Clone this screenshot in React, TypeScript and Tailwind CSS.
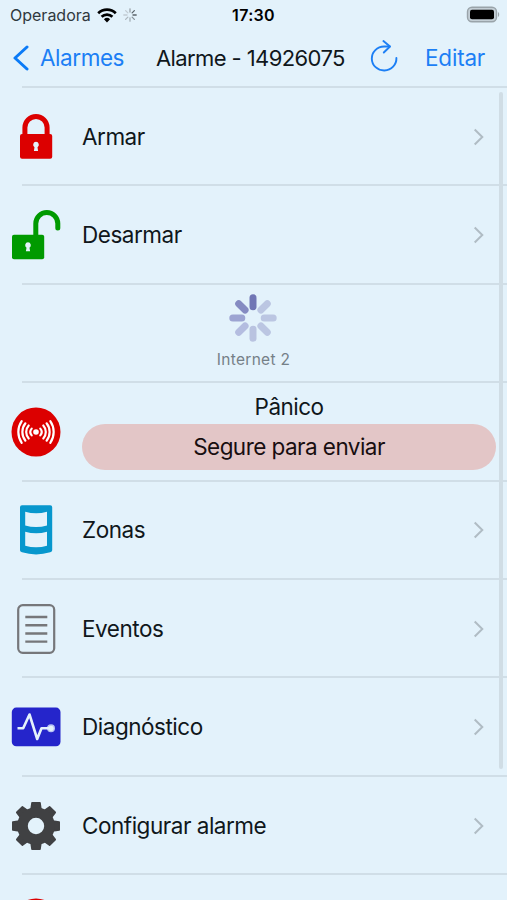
import type { ReactNode } from "react";

function WifiIcon() {
  return (
    <svg width="20" height="15" viewBox="0 0 20 15" className="shrink-0">
      <g fill="none" stroke="#000" strokeWidth="2.7">
        <path d="M1.2 5.2a12.6 12.6 0 0 1 17.6 0" />
        <path d="M4.6 8.8a7.7 7.7 0 0 1 10.8 0" />
      </g>
      <path d="M6.9 11.2a4.5 4.5 0 0 1 6.2 0L10 14.4z" fill="#000" />
    </svg>
  );
}

function StatusSpinner() {
  const shades = ["#9aa2a8", "#59636a", "#59636a", "#87929a", "#a5afb6", "#adb7be", "#c2ccd3", "#c2ccd3"];
  return (
    <svg width="14" height="14" viewBox="0 0 14 14" className="shrink-0">
      {shades.map((c, i) => (
        <path key={i} d="M7 .8V4" stroke={c} strokeWidth="1.3" strokeLinecap="round" transform={`rotate(${i * 45} 7 7)`} />
      ))}
    </svg>
  );
}

function BatteryIcon() {
  return (
    <svg width="34" height="18" viewBox="0 0 34 18">
      <rect x="1.5" y="1.2" width="29" height="14.6" rx="4.5" fill="#c3ced5" stroke="#9aa4aa" strokeWidth="1.4" />
      <rect x="4" y="3.7" width="24" height="9.6" rx="2" fill="#000" />
      <path d="M32 6v5c1.6-.7 1.6-4.3 0-5z" fill="#9aa4aa" />
    </svg>
  );
}

function RefreshIcon() {
  return (
    <svg width="30" height="34" viewBox="0 0 30 34" fill="none" stroke="#1c7ff5" strokeWidth="1.9" strokeLinecap="round" strokeLinejoin="round">
      <path d="M27.4 19A12.3 12 0 1 1 15.1 7.5h5.6" />
      <path d="M14.4 2l6.6 5.5-6.2 6" />
    </svg>
  );
}

function LockIcon() {
  return (
    <svg width="50" height="50" viewBox="0 0 50 50">
      <path d="M11.4 24V15.5a13.6 13.6 0 0 1 27.2 0V24h-5v-8.5a8.6 8.6 0 0 0-17.2 0V24z" fill="#dc0000" />
      <rect x="9" y="22" width="32.2" height="24.8" rx="2" fill="#dc0000" />
      <path d="M25 29.8a3 3 0 0 1 1.5 5.5l.6 3.6h-4.2l.6-3.6a3 3 0 0 1 1.5-5.5z" fill="#e4f2fb" />
    </svg>
  );
}

function UnlockIcon() {
  return (
    <svg width="50" height="50" viewBox="0 0 50 50">
      <path d="M24.8 27V13.5a11 11 0 0 1 22 0V18" fill="none" stroke="#009a00" strokeWidth="5" strokeLinecap="round" />
      <rect x="1" y="24.7" width="32.2" height="24.6" rx="2" fill="#009a00" />
      <path d="M17 32.2a3 3 0 0 1 1.5 5.5l.6 3.6h-4.2l.6-3.6a3 3 0 0 1 1.5-5.5z" fill="#e4f2fb" />
    </svg>
  );
}

function Spinner() {
  const shades = ["#7076b5", "#bbc6e2", "#bbc6e2", "#bbc6e2", "#b9c3e0", "#b4bde0", "#9ca4d2", "#858bc2"];
  return (
    <svg width="50" height="50" viewBox="0 0 50 50" className="mr-[2px]">
      {shades.map((c, i) => (
        <path key={i} d="M25 4.8v9" stroke={c} strokeWidth="7" strokeLinecap="round" transform={`rotate(${i * 45} 25 25)`} />
      ))}
    </svg>
  );
}

function PanicIcon() {
  const side = (
    <>
      <path d="M29.3 21.6a5.2 5.2 0 0 1 0 6.8" />
      <path d="M32.3 18.5a9.7 9.7 0 0 1 0 13" />
      <path d="M35.6 16.3a14 14 0 0 1 0 17.4" />
      <path d="M39.3 14.2a19 19 0 0 1 0 21.6" />
    </>
  );
  return (
    <svg width="50" height="50" viewBox="0 0 50 50">
      <circle cx="25" cy="25" r="24.5" fill="#dc0000" />
      <circle cx="25" cy="25" r="2.8" fill="#fff" />
      <g fill="none" stroke="#fff" strokeWidth="2.2" strokeLinecap="round">
        <g>{side}</g>
        <g transform="matrix(-1 0 0 1 50 0)">{side}</g>
      </g>
    </svg>
  );
}

function ZonesIcon() {
  return (
    <svg width="50" height="50" viewBox="0 0 50 50">
      <path d="M11 .3h28.200q2 0 2 2v43q0 1.500-2 2-14.100 4.200-28.200 0-2-.5-2-2v-43q0-2 2-2z" fill="#0797cd" />
      <path d="M14.200 6.700q10.900 3.200 21.800 0v13.800q-10.900 3.200-21.800 0z" fill="#e4f2fb" />
      <path d="M14.200 26.700q10.900 3.200 21.800 0v14q-10.900 3.200-21.800 0z" fill="#e4f2fb" />
    </svg>
  );
}

function EventsIcon() {
  return (
    <svg width="50" height="50" viewBox="0 0 50 50" fill="none" stroke="#76777a">
      <rect x="7.2" y="1.2" width="36" height="47.6" rx="4.5" strokeWidth="2.2" />
      <path d="M14.3 13h22M14.3 21.2h22M14.3 29.5h22M14.3 37.6h22" strokeWidth="2.4" />
    </svg>
  );
}

function DiagnosticIcon() {
  return (
    <svg width="50" height="50" viewBox="0 0 50 50">
      <rect x=".8" y="5.6" width="48.7" height="38.6" rx="4.5" fill="#2525cb" />
      <circle cx="40" cy="26.3" r="4" fill="#b9c3f5" />
      <circle cx="40" cy="26.3" r="2.6" fill="#e4f2fb" />
      <path d="M6.5 26.3h5.7l6.3-13.8 7.7 24.5 4.3-10.7H39" fill="none" stroke="#e4f2fb" strokeWidth="2.6" strokeLinejoin="round" />
    </svg>
  );
}

function GearIcon() {
  return (
    <svg width="50" height="50" viewBox="0 0 50 50">
      <g fill="#404143" stroke="#404143" strokeLinejoin="round">
        {[0, 45, 90, 135, 180, 225, 270, 315].map((a) => (
          <path key={a} d="M19.8 10l1.2-8.2h8l1.2 8.2z" strokeWidth="1.6" transform={`rotate(${a} 25 25)`} />
        ))}
      </g>
      <circle cx="25" cy="25" r="13.5" fill="none" stroke="#404143" strokeWidth="10.6" />
    </svg>
  );
}

function Chevron() {
  return (
    <svg width="12" height="18" viewBox="0 0 12 18" fill="none" stroke="#b0bcc4" strokeWidth="2" className="mr-[22px] ml-auto">
      <path d="M1.7 1.5L9.3 9l-7.6 7.5" />
    </svg>
  );
}

function Row({ icon, label }: { icon: ReactNode; label: string }) {
  return (
    <div className="flex h-[98.4px] items-center pb-[0.8px]">
      <div className="flex w-[82px] shrink-0 justify-start pl-[11px]">{icon}</div>
      <span className="text-[22.5px] tracking-[-0.48px] whitespace-nowrap">{label}</span>
      <Chevron />
    </div>
  );
}

function Divider() {
  return <div className="-mt-[2px] ml-[22px] h-[2px] bg-[#d0dee7]" />;
}

export default function App() {
  return (
    <div className="relative h-[900px] w-[507px] overflow-hidden bg-[#e3f2fb] font-['Inter',sans-serif] text-[#10171b]">
      <header className="h-[88px]">
        <div className="grid h-[30px] grid-cols-3 items-center">
          <div className="flex items-center pl-[10px]">
            <span className="text-[16px] text-[#30393e]">Operadora</span>
            <span className="ml-[6px]"><WifiIcon /></span>
            <span className="ml-[6px]"><StatusSpinner /></span>
          </div>
          <span className="text-center text-[16px] font-semibold tracking-[0.3px] text-black">17:30</span>
          <div className="flex justify-end pr-[7px]"><BatteryIcon /></div>
        </div>
        <nav className="flex h-[56px] items-center pl-[13px] text-[22.5px] whitespace-nowrap">
          <svg width="17" height="26" viewBox="0 0 17 26" fill="none" stroke="#0b7bf7" strokeWidth="3" strokeLinecap="round" strokeLinejoin="round">
            <path d="M14 2L2 13 14 24" />
          </svg>
          <span className="ml-[10px] w-[116px] tracking-[-0.45px] text-[#1c7ff5]">Alarmes</span>
          <span className="w-[213px] text-[22px] tracking-[-0.6px]">Alarme - 14926075</span>
          <span className="-mt-[4px] w-[56px]"><RefreshIcon /></span>
          <span className="tracking-[-0.2px] text-[#1c7ff5]">Editar</span>
        </nav>
        <div className="ml-[22px] h-[2px] bg-[#d0dee7]" />
      </header>
      <main>
        <Row icon={<LockIcon />} label="Armar" />
        <Divider />
        <Row icon={<UnlockIcon />} label="Desarmar" />
        <Divider />
        <div className="flex h-[98.4px] flex-col items-center pt-[8px]">
          <Spinner />
          <span className="mt-[5.5px] text-[15.5px] leading-[24px] tracking-[0.3px] text-[#758087]">Internet 2</span>
        </div>
        <Divider />
        <div className="flex h-[98.4px] items-center pb-[1.5px] pl-[11px]">
          <PanicIcon />
          <div className="-mt-[3px] ml-[21px] flex w-[414px] flex-col items-center text-[22.5px] tracking-[-0.55px]">
            <span className="leading-[34px]">Pânico</span>
            <button className="h-[46px] w-full rounded-full bg-[#e3c6c7] tracking-[-0.55px] text-[#180e10]">Segure para enviar</button>
          </div>
        </div>
        <Divider />
        <Row icon={<ZonesIcon />} label="Zonas" />
        <Divider />
        <Row icon={<EventsIcon />} label="Eventos" />
        <Divider />
        <Row icon={<DiagnosticIcon />} label="Diagnóstico" />
        <Divider />
        <Row icon={<GearIcon />} label="Configurar alarme" />
        <Divider />
        <div className="pt-[22.5px] pl-[11px]"><PanicIcon /></div>
      </main>
      <div className="absolute top-[92px] right-[4px] h-[677px] w-[4px] rounded-full bg-[#d0dde5]" />
    </div>
  );
}
